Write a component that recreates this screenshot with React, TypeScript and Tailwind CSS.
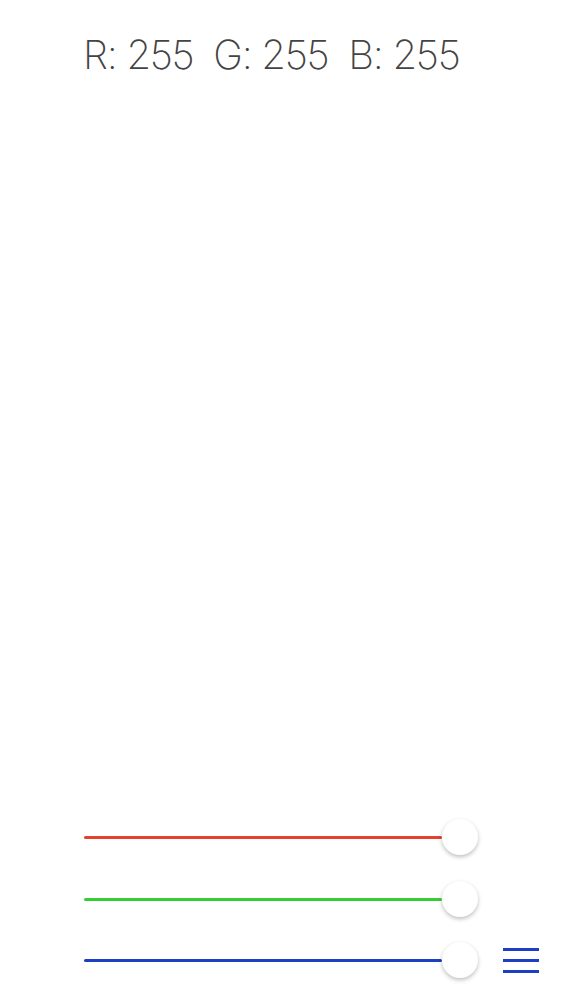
export default function App() {
  const sliders = [
    { color: 'bg-[#e5412f]', menu: false },
    { color: 'bg-[#35cf35]', menu: false },
    { color: 'bg-[#1d3fc2]', menu: true },
  ]

  return (
    <div className="flex h-[1000px] w-full flex-col justify-between bg-white font-['Inter',sans-serif]">
      <div className="pl-[83px] pt-[35px] text-[40px] font-extralight leading-none tracking-[-1.3px] text-[#444444] whitespace-pre">
        R: 255  G: 255  B: 255
      </div>

      <div className="flex flex-col gap-[26px] pb-[22px] pl-[84px]">
        {sliders.map((s, i) => (
          <div key={i} className={`flex h-9 items-center ${i < 2 ? 'translate-y-[1px]' : ''}`}>
            <div className={`h-[3px] w-[358px] rounded-full ${s.color}`} />
            <div className="h-9 w-9 shrink-0 rounded-full bg-white shadow-[0_2px_4px_rgba(0,0,0,0.25)]" />
            {s.menu && (
              <div className="ml-[25px] flex w-9 flex-col gap-[8px]">
                <div className="h-[3px] bg-[#1d3fc2]" />
                <div className="h-[3px] bg-[#1d3fc2]" />
                <div className="h-[3px] bg-[#1d3fc2]" />
              </div>
            )}
          </div>
        ))}
      </div>
    </div>
  )
}
